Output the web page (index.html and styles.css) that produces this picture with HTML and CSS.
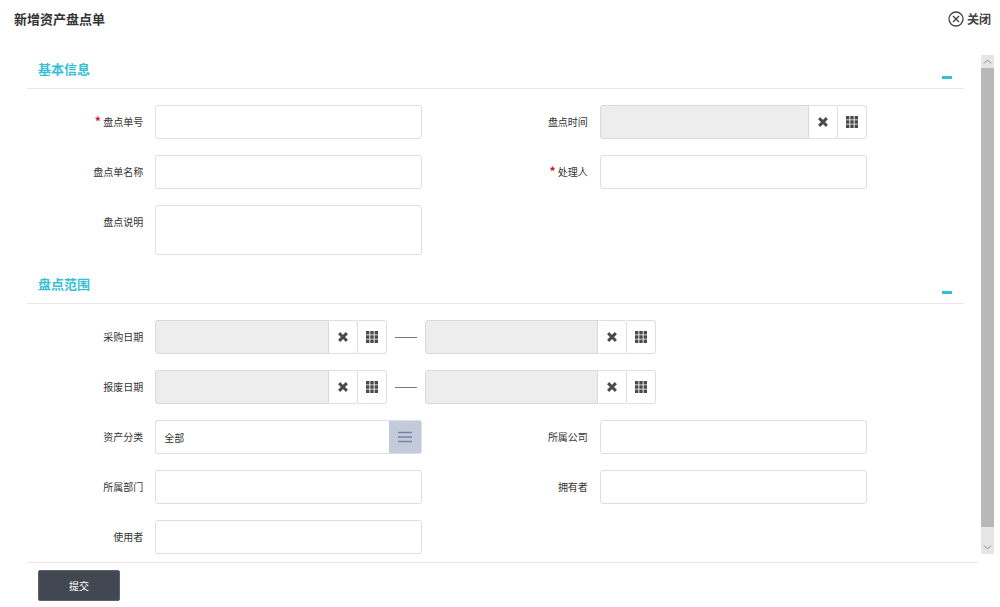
FILE: index.html
```html
<!DOCTYPE html>
<html lang="zh-CN">
<head>
    <meta charset="UTF-8">
    <meta name="viewport" content="width=device-width, initial-scale=1.0">
    <title>新增资产盘点单</title>
    <link rel="stylesheet" href="styles.css">
</head>
<body>
    <!-- 图标 -->
    <svg class="sprite" aria-hidden="true">
        <symbol id="icon-times" viewBox="0 0 12 12">
            <path d="M3.2 3.2l5.6 5.6M8.8 3.2l-5.6 5.6" fill="none" stroke="currentColor" stroke-width="3" stroke-linecap="square"/>
        </symbol>
        <symbol id="icon-grid" viewBox="0 0 12 12">
            <path d="M0 0h3.4v3.4H0zM4.3 0h3.4v3.4H4.3zM8.6 0H12v3.4H8.6zM0 4.3h3.4v3.4H0zM4.3 4.3h3.4v3.4H4.3zM8.6 4.3H12v3.4H8.6zM0 8.6h3.4V12H0zM4.3 8.6h3.4V12H4.3zM8.6 8.6H12V12H8.6z" fill="currentColor"/>
        </symbol>
    </svg>

    <header class="page-header">
        <h1>新增资产盘点单</h1>
        <button type="button" class="close-btn">
            <svg width="16" height="16" viewBox="0 0 16 16" fill="none" stroke="currentColor">
                <circle cx="8" cy="8" r="7" stroke-width="1.3"/>
                <path d="M5 5l6 6M11 5l-6 6" stroke-width="1.4"/>
            </svg>
            关闭
        </button>
    </header>

    <form class="page-form">
        <div class="scroll-area">
            <div class="sections">
                <!-- 基本信息 -->
                <section>
                    <div class="section-header">
                        <h2>基本信息</h2>
                        <button type="button" class="collapse-btn" aria-label="收起"></button>
                    </div>
                    <div class="fields">
                        <label for="code"><span class="required">*</span> 盘点单号</label>
                        <input type="text" id="code" class="control">
                        <label for="time">盘点时间</label>
                        <div class="date-group">
                            <input type="text" id="time" class="control" readonly>
                            <button type="button" aria-label="清除"><svg class="icon"><use href="#icon-times"/></svg></button>
                            <button type="button" aria-label="选择"><svg class="icon"><use href="#icon-grid"/></svg></button>
                        </div>

                        <label for="name">盘点单名称</label>
                        <input type="text" id="name" class="control">
                        <label for="handler"><span class="required">*</span> 处理人</label>
                        <input type="text" id="handler" class="control">

                        <label for="remark">盘点说明</label>
                        <textarea id="remark" class="control"></textarea>
                    </div>
                </section>

                <!-- 盘点范围 -->
                <section>
                    <div class="section-header">
                        <h2>盘点范围</h2>
                        <button type="button" class="collapse-btn" aria-label="收起"></button>
                    </div>
                    <div class="fields">
                        <label for="buyStart">采购日期</label>
                        <div class="range">
                            <div class="date-group">
                                <input type="text" id="buyStart" class="control" readonly>
                                <button type="button" aria-label="清除"><svg class="icon"><use href="#icon-times"/></svg></button>
                                <button type="button" aria-label="选择"><svg class="icon"><use href="#icon-grid"/></svg></button>
                            </div>
                            <span class="dash"></span>
                            <div class="date-group">
                                <input type="text" aria-label="采购日期止" class="control" readonly>
                                <button type="button" aria-label="清除"><svg class="icon"><use href="#icon-times"/></svg></button>
                                <button type="button" aria-label="选择"><svg class="icon"><use href="#icon-grid"/></svg></button>
                            </div>
                        </div>

                        <label for="scrapStart">报废日期</label>
                        <div class="range">
                            <div class="date-group">
                                <input type="text" id="scrapStart" class="control" readonly>
                                <button type="button" aria-label="清除"><svg class="icon"><use href="#icon-times"/></svg></button>
                                <button type="button" aria-label="选择"><svg class="icon"><use href="#icon-grid"/></svg></button>
                            </div>
                            <span class="dash"></span>
                            <div class="date-group">
                                <input type="text" aria-label="报废日期止" class="control" readonly>
                                <button type="button" aria-label="清除"><svg class="icon"><use href="#icon-times"/></svg></button>
                                <button type="button" aria-label="选择"><svg class="icon"><use href="#icon-grid"/></svg></button>
                            </div>
                        </div>

                        <label for="category">资产分类</label>
                        <div class="picker">
                            <input type="text" id="category" class="control" value="全部">
                            <button type="button" aria-label="选择分类">
                                <svg width="14" height="12" viewBox="0 0 14 12"><path d="M0 1.5h14M0 6h14M0 10.5h14" stroke="currentColor" stroke-width="1.5"/></svg>
                            </button>
                        </div>
                        <label for="company">所属公司</label>
                        <input type="text" id="company" class="control">

                        <label for="department">所属部门</label>
                        <input type="text" id="department" class="control">
                        <label for="owner">拥有者</label>
                        <input type="text" id="owner" class="control">

                        <label for="user">使用者</label>
                        <input type="text" id="user" class="control">
                    </div>
                </section>
            </div>

            <!-- 滚动条 -->
            <div class="scrollbar" aria-hidden="true">
                <svg viewBox="0 0 13 13"><path d="M3 8.5l3.5-3.5L10 8.5" fill="none" stroke="#888"/></svg>
                <div class="track"><div class="thumb"></div></div>
                <svg viewBox="0 0 13 13"><path d="M3 4.5L6.5 8 10 4.5" fill="none" stroke="#888"/></svg>
            </div>
        </div>

        <footer class="page-footer">
            <button type="submit" class="submit-btn">提交</button>
        </footer>
    </form>
</body>
</html>
```

FILE: styles.css
```css
* {
    box-sizing: border-box;
}
body {
    margin: 0;
    background: #fff;
    color: #333;
    font-family: "Noto Sans CJK SC", sans-serif;
    font-size: 10px;
}
button,
input,
textarea {
    font-family: inherit;
    font-size: 10px;
    color: inherit;
    margin: 0;
}
button {
    padding: 0;
    border: none;
    background: none;
    cursor: pointer;
}
.sprite {
    display: none;
}

/* 顶部 */
.page-header {
    display: flex;
    justify-content: space-between;
    align-items: center;
    height: 37px;
    padding: 0 9px 0 14px;
}
.page-header h1 {
    margin: 0;
    font-size: 13px;
    font-weight: bold;
}
.close-btn {
    display: flex;
    align-items: center;
    gap: 3px;
    color: #444;
    font-size: 12px;
    font-weight: bold;
}

/* 表单 */
.page-form {
    padding-top: 18px;
}
.scroll-area {
    display: flex;
    gap: 17px;
    padding: 0 6px 0 27px;
}
.sections {
    flex: 1;
    min-width: 0;
}
section + section {
    margin-top: 15px;
}
.section-header {
    display: flex;
    justify-content: space-between;
    height: 34px;
    padding: 0 12px 0 11px;
    border-bottom: 1px solid #e9e9ea;
}
.section-header h2 {
    margin: 0;
    color: #36bfd4;
    font-size: 13px;
    line-height: 28px;
    font-weight: bold;
}
.collapse-btn {
    align-self: flex-end;
    width: 10px;
    height: 3px;
    margin-bottom: 9px;
    background: #36bfd4;
}
.fields {
    display: grid;
    grid-template-columns: 12.4% 28.5% 16.4% 28.5%;
    gap: 16px 12px;
    padding-top: 16px;
}
.fields label {
    line-height: 34px;
    text-align: right;
}
.required {
    color: #d9103f;
    font-size: 12px;
    font-weight: bold;
    line-height: 1;
}
.control {
    display: block;
    width: 100%;
    min-width: 0;
    height: 34px;
    padding: 0 8px;
    border: 1px solid #dcdfe6;
    border-radius: 3px;
    background: #fff;
    outline: none;
}
textarea.control {
    height: 50px;
    padding: 8px;
    resize: none;
}
.control[readonly] {
    background: #ededed;
    border-color: #d5d9e2;
}

/* 日期 */
.date-group {
    display: flex;
    flex: 1;
    min-width: 0;
}
.date-group .control {
    flex: 1;
    border-radius: 3px 0 0 3px;
}
.date-group button {
    display: flex;
    align-items: center;
    justify-content: center;
    width: 29px;
    height: 34px;
    border: 1px solid #dcdfe6;
    border-left: none;
    border-radius: 0 3px 3px 0;
    color: #4a4a4a;
}
.icon {
    width: 12px;
    height: 12px;
}
.range {
    grid-column: 2 / -1;
    display: flex;
    align-items: center;
    width: 70.4%;
}
.dash {
    width: 22px;
    height: 1px;
    margin: 0 8px;
    background: #777;
}

/* 分类选择 */
.picker {
    display: flex;
}
.picker .control {
    flex: 1;
    border-right: none;
    border-radius: 3px 0 0 3px;
}
.picker button {
    display: flex;
    align-items: center;
    justify-content: center;
    width: 33px;
    height: 34px;
    border: 1px solid #dcdfe6;
    border-left: none;
    border-radius: 0 3px 3px 0;
    background: #c3cbda;
    color: #7486a5;
}

/* 滚动条 */
.scrollbar {
    display: flex;
    flex-direction: column;
    width: 13px;
    background: #e6e6e6;
}
.scrollbar svg {
    width: 13px;
    height: 13px;
}
.track {
    flex: 1;
}
.thumb {
    height: 97%;
    background: #b8b8b8;
}

/* 底部 */
.page-footer {
    margin: 8px 22px 0 27px;
    padding: 7px 11px;
    border-top: 1px solid #e9e9ea;
}
.submit-btn {
    width: 82px;
    height: 31px;
    border: 1px solid #5c636b;
    border-radius: 2px;
    background: #414851;
    color: #fff;
}
```
